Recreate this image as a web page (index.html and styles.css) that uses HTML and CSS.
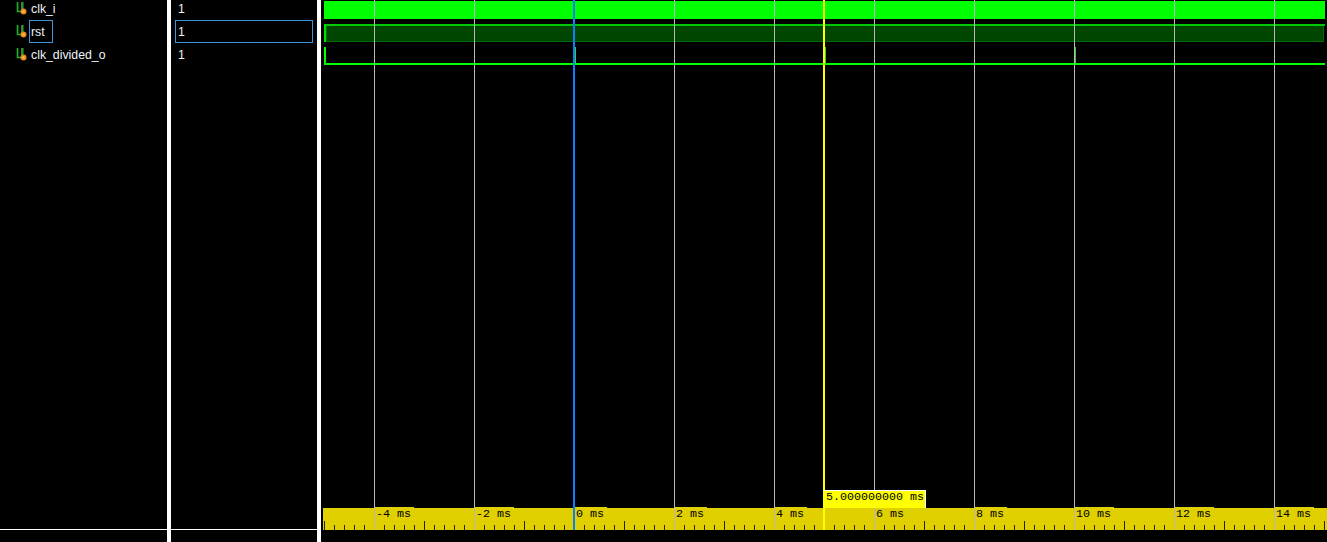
FILE: index.html
```html
<!DOCTYPE html>
<html lang="en">
<head>
    <meta charset="UTF-8">
    <title>Waveform</title>
    <link rel="stylesheet" href="styles.css">
</head>
<body>
    <svg width="0" height="0" class="defs">
        <symbol id="signal" viewBox="0 0 11 13">
            <path d="M1.5 0v9.5H5" fill="none" stroke="#22b02e" stroke-width="1.6"/>
            <path d="M2.8 1v7" fill="none" stroke="#0b4a12" stroke-width="1"/>
            <path d="M5.5 0v8" fill="none" stroke="#6b6b4a" stroke-width="1"/>
            <path d="M6.8 0v7" fill="none" stroke="#22b02e" stroke-width="1.4"/>
            <circle cx="7.5" cy="9.5" r="3" fill="#e8871e"/>
            <circle cx="7.5" cy="9.5" r="1.3" fill="#ffc04d"/>
        </symbol>
    </svg>

    <div class="pane names">
        <div class="rows">
            <div class="row"><svg class="icon"><use href="#signal"/></svg><span class="name">clk_i</span></div>
            <div class="row"><svg class="icon"><use href="#signal"/></svg><span class="name selected">rst</span></div>
            <div class="row"><svg class="icon"><use href="#signal"/></svg><span class="name">clk_divided_o</span></div>
        </div>
        <div class="pane-foot"></div>
    </div>

    <div class="pane values">
        <div class="rows">
            <div class="row"><span class="value">1</span></div>
            <div class="row"><span class="value selected">1</span></div>
            <div class="row"><span class="value">1</span></div>
        </div>
        <div class="pane-foot"></div>
    </div>

    <div class="pane waves">
        <div class="traces">
            <div class="trace high"></div>
            <div class="trace weak"><div class="weak-fill"></div></div>
            <div class="trace edge"></div>
        </div>

        <div class="ruler">
            <div class="ruler-labels">
                <div class="slot"><span class="label">-4 ms</span></div>
                <div class="slot"><span class="label">-2 ms</span></div>
                <div class="slot"><span class="label">0 ms</span></div>
                <div class="slot"><span class="label">2 ms</span></div>
                <div class="slot"><span class="label">4 ms</span></div>
                <div class="slot"><span class="label">6 ms</span></div>
                <div class="slot"><span class="label">8 ms</span></div>
                <div class="slot"><span class="label">10 ms</span></div>
                <div class="slot"><span class="label">12 ms</span></div>
                <div class="slot"><span class="label">14 ms</span></div>
            </div>
        </div>

        <div class="grid">
            <div class="gridline"></div>
            <div class="gridline"></div>
            <div class="gridline"></div>
            <div class="gridline"></div>
            <div class="gridline"></div>
            <div class="gridline"></div>
            <div class="gridline"></div>
            <div class="gridline"></div>
            <div class="gridline"></div>
            <div class="gridline"></div>
        </div>
        <div class="cursor origin"></div>
        <div class="cursor main"></div>
        <div class="cursor-time">5.000000000 ms</div>
    </div>
</body>
</html>
```

FILE: styles.css
```css
html, body {
    margin: 0;
    padding: 0;
}

body {
    display: flex;
    width: 1327px;
    height: 542px;
    overflow: hidden;
    background-color: #000;
    font-family: 'Liberation Sans', Arial, sans-serif;
    font-size: 12.3px;
    color: #eef4fa;
}

.defs {
    position: absolute;
}

.pane {
    display: flex;
    flex-direction: column;
    flex: none;
    box-sizing: border-box;
    overflow: hidden;
}

.names {
    width: 171px;
    border-right: 4px solid #fff;
}

.values {
    width: 150px;
    border-right: 4px solid #fff;
}

.rows {
    flex: 1;
    margin-top: -3px;
}

.row {
    display: flex;
    align-items: center;
    height: 23px;
}

.pane-foot {
    height: 12px;
    border-top: 1px solid #fff;
}

.icon {
    flex: none;
    width: 11px;
    height: 13px;
    margin: 0 2px 0 16px;
}

.name {
    box-sizing: border-box;
    height: 23px;
    padding: 1px 7px 0 1px;
    border: 1px solid transparent;
    line-height: 21px;
}

.value {
    box-sizing: border-box;
    width: 138px;
    height: 23px;
    margin-left: 4px;
    padding: 1px 0 0 2px;
    border: 1px solid transparent;
    line-height: 21px;
}

.selected {
    border-color: #3a96dd;
}

.waves {
    position: relative;
    flex: 1;
}

.traces {
    flex: 1;
    display: flex;
    flex-direction: column;
    gap: 5px;
    padding: 1px 2px 0 3px;
}

.trace {
    box-sizing: border-box;
    height: 18px;
}

.high {
    background-color: #0f0;
}

.weak {
    border-top: 2px solid #00c800;
    border-left: 2px solid #00e000;
}

.weak-fill {
    box-sizing: border-box;
    height: 16px;
    margin-right: 1px;
    border: 1px solid #006a00;
    border-top: none;
    background-color: #004600;
}

.edge {
    border-left: 2px solid #0f0;
    border-bottom: 2px solid #0f0;
    background-origin: border-box;
    background-image: repeating-linear-gradient(90deg, transparent 0 1px, #35d035 1px 2px, transparent 2px 250px);
}

.ruler {
    height: 22px;
    margin: 0 0 12px 2px;
    background-color: #e0d000;
    background-repeat: no-repeat;
    background-position: 1px bottom;
    background-size: 100% 9px, 100% 5px;
    background-image:
        repeating-linear-gradient(90deg, #222 0 1px, transparent 1px 100px),
        repeating-linear-gradient(90deg, #222 0 1px, transparent 1px 10px);
}

.ruler-labels {
    display: flex;
    margin-top: -1px;
    padding-left: 52px;
    transform: translateY(-1px);
}

.slot {
    flex: none;
    width: 100px;
}

.label {
    display: inline-block;
    padding: 0 3px 0 1px;
    background-color: #e0d000;
    font-family: 'Liberation Mono', 'Courier New', monospace;
    font-size: 11.67px;
    line-height: 15px;
    color: #000;
}

.grid {
    position: absolute;
    top: 0;
    bottom: 12px;
    left: 53px;
    display: flex;
}

.gridline {
    flex: none;
    box-sizing: border-box;
    width: 100px;
    border-left: 1px solid #b8b8b8;
}

.cursor {
    position: absolute;
    top: 0;
    bottom: 12px;
    width: 2px;
}

.origin {
    left: 252px;
    background-color: #0a80ff;
}

.main {
    left: 502px;
    background-color: #ff0;
}

.cursor-time {
    position: absolute;
    top: 490px;
    left: 502px;
    box-sizing: border-box;
    width: 103px;
    height: 18px;
    padding-left: 3px;
    border-top: 1px solid #fff;
    border-right: 1px solid #fff;
    background-color: #ff0;
    font-family: 'Liberation Mono', 'Courier New', monospace;
    font-size: 11.67px;
    line-height: 12px;
    color: #000;
}
```
